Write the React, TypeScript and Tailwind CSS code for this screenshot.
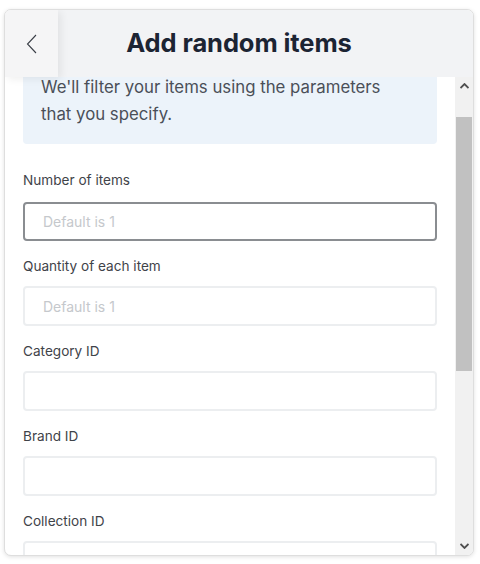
const fields = [
  { label: "Number of items", placeholder: "Default is 1", focused: true },
  { label: "Quantity of each item", placeholder: "Default is 1" },
  { label: "Category ID", placeholder: "" },
  { label: "Brand ID", placeholder: "" },
  { label: "Collection ID", placeholder: "" },
];

const font = { fontFamily: "Inter, 'Noto Sans', sans-serif" };

const ScrollBar = () => (
  <div className="w-[18px] shrink-0 bg-[#f1f1f1] flex flex-col">
    <div className="h-[18px] flex items-center justify-center text-[#505050]">
      <svg width="9" height="6" viewBox="0 0 9 6">
        <path d="M0.5 5 L4.5 1 L8.5 5" fill="none" stroke="currentColor" strokeWidth="1.8" />
      </svg>
    </div>
    <div className="h-[22px]" />
    <div className="h-[254px] mx-[1px] bg-[#c1c1c1]" />
    <div className="flex-1" />
    <div className="h-[18px] flex items-center justify-center text-[#505050]">
      <svg width="9" height="6" viewBox="0 0 9 6">
        <path d="M0.5 1 L4.5 5 L8.5 1" fill="none" stroke="currentColor" strokeWidth="1.8" />
      </svg>
    </div>
  </div>
);

export default function App() {
  return (
    <div className="w-[480px] h-[564px] bg-white pt-[9px] pl-[4px] pr-[6px] pb-[8px]" style={font}>
      <div className="h-full flex flex-col rounded-[7px] border border-[#dedede] bg-white shadow-[0_1px_4px_rgba(0,0,0,0.12)] overflow-hidden">
        <header className="relative z-10 h-[67px] shrink-0 flex items-center bg-[#f2f3f5]">
          <button className="w-[53px] h-full flex items-center justify-center bg-[#f5f5f6] shadow-[3px_2px_8px_rgba(0,0,0,0.07)] text-[#3a3f47]">
            <svg width="11" height="20" viewBox="0 0 11 20">
              <path d="M10 1 L1.5 10 L10 19" fill="none" stroke="currentColor" strokeWidth="1.1" />
            </svg>
          </button>
          <h1 className="flex-1 text-center pr-[53px] text-[25.5px] font-bold tracking-[-0.1px] text-[#1c2433]">
            Add random items
          </h1>
        </header>

        <div className="flex-1 flex min-h-0">
          <div className="flex-1 overflow-hidden px-[18px]">
            <div className="-mt-[19px]">
              <div className="rounded-[4px] bg-[#ecf3fa] px-[18px] pt-[16px] pb-[16px] text-[16.8px] leading-[27px] text-[#4a4f58]">
                We'll filter your items using the parameters
                <br />
                that you specify.
              </div>

              <form className="pt-[26px] flex flex-col">
                {fields.map((f) => (
                  <div key={f.label} className="flex flex-col pb-[15px]">
                    <label className="text-[13.6px] leading-[20px] text-[#3f4349]">{f.label}</label>
                    <input
                      type="text"
                      placeholder={f.placeholder}
                      className={
                        f.focused
                          ? "mt-[12px] h-[39px] w-full rounded-[4px] border-2 border-[#8a8d91] bg-white px-[18px] text-[14px] text-[#333] placeholder:text-[#c5c8cc] outline-none"
                          : "mt-[10px] h-[40px] w-full rounded-[4px] border-2 border-[#eceef0] bg-white px-[18px] text-[14px] text-[#333] placeholder:text-[#c5c8cc] outline-none"
                      }
                    />
                  </div>
                ))}
              </form>
            </div>
          </div>
          <ScrollBar />
        </div>
      </div>
    </div>
  );
}
